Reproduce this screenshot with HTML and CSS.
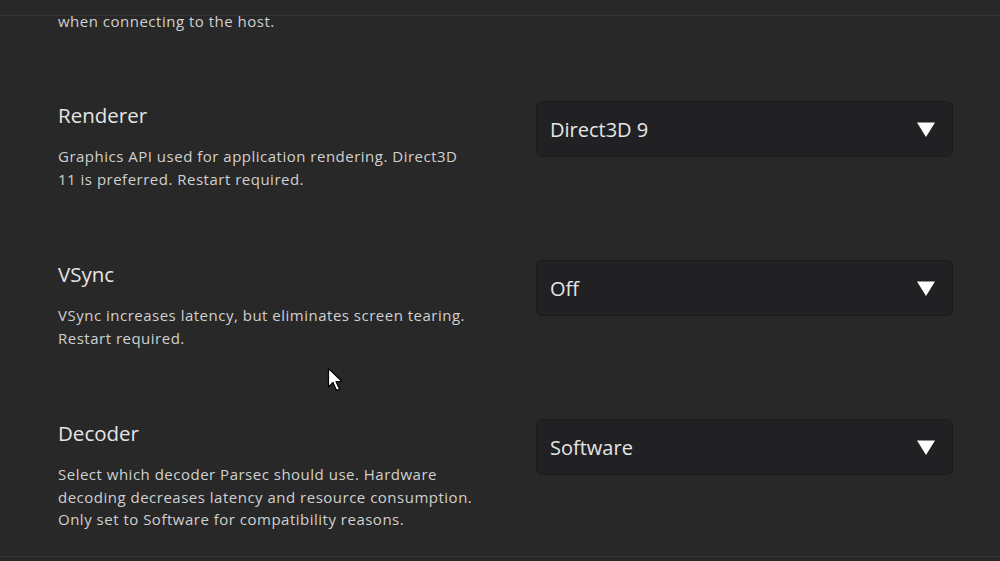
FILE: index.html
```html
<!DOCTYPE html>
<html lang="en">

<head>
    <meta charset="UTF-8">
    <meta name="viewport" content="width=device-width, initial-scale=1.0">
    <title>Settings</title>
    <link rel="stylesheet" href="styles.css">
</head>

<body>
    <main class="app">
        <div class="topbar"></div>

        <div class="scroll">
            <div class="list">
                <p class="desc tail">when connecting to the host.</p>

                <div class="row">
                    <div class="info">
                        <h2>Renderer</h2>
                        <p class="desc">Graphics API used for application rendering. Direct3D<br>11 is preferred. Restart required.</p>
                    </div>
                    <div class="select">
                        <span>Direct3D 9</span>
                        <svg class="caret" width="20" height="17" viewBox="0 0 20 17"><path d="M1 1.5 H19 L10 16 Z" fill="#fff"/></svg>
                    </div>
                </div>

                <div class="row">
                    <div class="info">
                        <h2>VSync</h2>
                        <p class="desc">VSync increases latency, but eliminates screen tearing.<br>Restart required.</p>
                    </div>
                    <div class="select">
                        <span>Off</span>
                        <svg class="caret" width="20" height="17" viewBox="0 0 20 17"><path d="M1 1.5 H19 L10 16 Z" fill="#fff"/></svg>
                    </div>
                </div>

                <div class="row">
                    <div class="info">
                        <h2>Decoder</h2>
                        <p class="desc">Select which decoder Parsec should use. Hardware<br>decoding decreases latency and resource consumption.<br>Only set to Software for compatibility reasons.</p>
                    </div>
                    <div class="select">
                        <span>Software</span>
                        <svg class="caret" width="20" height="17" viewBox="0 0 20 17"><path d="M1 1.5 H19 L10 16 Z" fill="#fff"/></svg>
                    </div>
                </div>
            </div>
        </div>

        <div class="bottombar"></div>

        <svg class="cursor" width="19" height="26" viewBox="0 0 19 26">
            <path d="M1.5 1.5 V20 L6 15.5 L9.5 23.5 L12.5 22 L9 14.5 H15 Z" fill="#fff" stroke="#000" stroke-width="1.2" stroke-linejoin="round"/>
        </svg>
    </main>
</body>

</html>
```

FILE: styles.css
```css
* {
    margin: 0;
    padding: 0;
    box-sizing: border-box;
    font-family: 'Open Sans', 'Noto Sans', sans-serif;
}

body {
    background-color: #282828;
    overflow: hidden;
}

.app {
    height: 561px;
    position: relative;
    display: flex;
    flex-direction: column;
}

.topbar {
    height: 16px;
    border-bottom: 1px solid #363636;
    flex-shrink: 0;
}

.scroll {
    height: 540px;
    flex-shrink: 0;
}

.desc {
    font-size: 15px;
    letter-spacing: 0.5px;
    line-height: 22.5px;
    color: #d0d0d0;
}

.tail {
    padding-left: 58px;
    line-height: 10px;
    margin-bottom: 75px;
}

.row {
    display: flex;
    align-items: flex-start;
    height: 159px;
    padding: 0 47px 0 58px;
}

.row:last-child {
    height: auto;
}

.info h2 {
    font-size: 20.5px;
    font-weight: 400;
    line-height: 28px;
    color: #e4e4e4;
    margin-bottom: 16px;
}

.select {
    margin-left: auto;
    width: 417px;
    height: 56px;
    background-color: #212123;
    border: 1px solid #1b1b1c;
    border-radius: 6px;
    display: flex;
    align-items: center;
    justify-content: space-between;
    padding: 0 16px 0 13px;
    font-size: 20px;
    color: #e6e6e6;
}

.caret {
    display: block;
}

.bottombar {
    border-top: 1px solid #363636;
    flex: 1;
}

.cursor {
    position: absolute;
    left: 327px;
    top: 367px;
}
```
